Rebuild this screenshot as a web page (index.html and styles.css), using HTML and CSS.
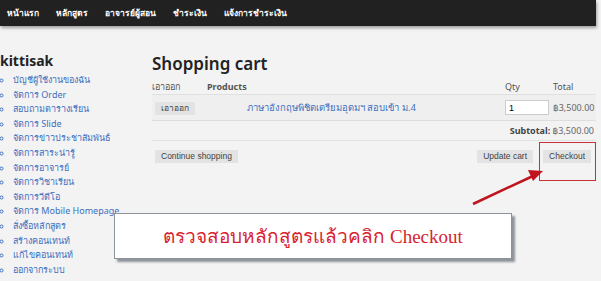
FILE: index.html
```html
<!DOCTYPE html>
<html lang="th">
<head>
  <meta charset="UTF-8" />
  <title>Shopping cart</title>
  <link rel="stylesheet" href="styles.css">
</head>
<body>

  <!-- Top navigation -->
  <div class="navbar">
    <a href="#">หน้าแรก</a>
    <a href="#">หลักสูตร</a>
    <a href="#">อาจารย์ผู้สอน</a>
    <a href="#">ชำระเงิน</a>
    <a href="#">แจ้งการชำระเงิน</a>
  </div>

  <div class="page">
    <!-- Sidebar -->
    <div class="sidebar">
      <h2>kittisak</h2>
      <ul>
        <li><a href="#">บัญชีผู้ใช้งานของฉัน</a></li>
        <li><a href="#">จัดการ Order</a></li>
        <li><a href="#">สอบถามตารางเรียน</a></li>
        <li><a href="#">จัดการ Slide</a></li>
        <li><a href="#">จัดการข่าวประชาสัมพันธ์</a></li>
        <li><a href="#">จัดการสาระน่ารู้</a></li>
        <li><a href="#">จัดการอาจารย์</a></li>
        <li><a href="#">จัดการวิชาเรียน</a></li>
        <li><a href="#">จัดการวีดีโอ</a></li>
        <li><a href="#">จัดการ Mobile Homepage</a></li>
        <li><a href="#">สั่งซื้อหลักสูตร</a></li>
        <li><a href="#">สร้างคอนเทนท์</a></li>
        <li><a href="#">แก้ไขคอนเทนท์</a></li>
        <li><a href="#">ออกจากระบบ</a></li>
      </ul>
    </div>

    <!-- Cart -->
    <div class="main">
      <h1>Shopping cart</h1>
      <table class="cart">
        <thead>
          <tr>
            <th class="col-remove">เอาออก</th>
            <th class="col-product">Products</th>
            <th class="col-qty">Qty</th>
            <th class="col-total">Total</th>
          </tr>
        </thead>
        <tbody>
          <tr class="item">
            <td><button class="btn">เอาออก</button></td>
            <td class="product"><a href="#">ภาษาอังกฤษพิชิตเตรียมอุดมฯ สอบเข้า ม.4</a></td>
            <td><input class="qty" type="text" value="1"></td>
            <td class="price">฿3,500.00</td>
          </tr>
          <tr class="subtotal">
            <td colspan="4"><strong>Subtotal:</strong> ฿3,500.00</td>
          </tr>
        </tbody>
      </table>
      <div class="actions">
        <button class="btn">Continue shopping</button>
        <div class="right">
          <button class="btn">Update cart</button>
          <button class="btn">Checkout</button>
        </div>
      </div>
    </div>
  </div>

  <!-- Annotation -->
  <div class="mark"></div>
  <svg class="arrow" width="601" height="281" viewBox="0 0 601 281">
    <line x1="473" y1="204" x2="533" y2="176" stroke="#c0141e" stroke-width="2.5"/>
    <polygon points="543,171 528,170 533,181" fill="#c0141e"/>
  </svg>
  <div class="callout">ตรวจสอบหลักสูตรแล้วคลิก Checkout</div>

</body>
</html>
```

FILE: styles.css
```css
body {
  font-family: 'Noto Sans', 'DejaVu Sans', sans-serif;
  background: #f3f3f3;
  color: #333;
  margin: 0;
  width: 601px;
  height: 281px;
  overflow: hidden;
  position: relative;
}

a {
  color: #3d6fbf;
  text-decoration: none;
}

/* Top bar */
.navbar {
  width: 589px;
  height: 26px;
  padding-left: 7px;
  background: #212121;
  box-shadow: 1px 2px 3px rgba(0, 0, 0, 0.35);
  display: flex;
  align-items: center;
  gap: 17px;
}

.navbar a {
  color: #fff;
  font-size: 8.5px;
  font-weight: bold;
}

.page {
  display: flex;
}

/* Sidebar */
.sidebar {
  width: 152px;
  padding-top: 26px;
}

.sidebar h2 {
  margin: 0 0 3px;
  font-size: 14px;
  line-height: 18px;
  color: #222;
}

.sidebar ul {
  margin: 0;
  padding-left: 13px;
  list-style: circle;
}

.sidebar li {
  font-size: 9px;
  line-height: 14.6px;
  color: #3d6fbf;
}

/* Main cart */
.main {
  width: 444px;
  padding-top: 26px;
}

.main h1 {
  margin: 0 0 3px;
  font-size: 17px;
  line-height: 24px;
  font-weight: 600;
  color: #222;
}

.cart {
  width: 100%;
  border-collapse: collapse;
  font-size: 9px;
  table-layout: fixed;
}

.cart th {
  text-align: left;
  font-weight: normal;
  color: #555;
  height: 15px;
  padding: 0;
  border-bottom: 1px solid #e0e0e0;
}

.cart .col-remove {
  width: 55px;
}

.cart .col-product {
  font-weight: bold;
  width: 298px;
}

.cart .col-qty {
  width: 48px;
}

.cart td {
  padding: 0;
}

.cart .item td {
  height: 25px;
  background: #efefef;
  border-bottom: 1px solid #dedede;
}

.cart .item td:first-child {
  padding-left: 3px;
}

.cart .product {
  padding-left: 40px !important;
  font-size: 9.5px;
}

.cart .price {
  color: #666;
}

.qty {
  width: 36px;
  height: 11px;
  padding: 1px 3px;
  font-size: 9px;
  border: 1px solid #ccc;
  background: #fff;
}

.cart .subtotal td {
  height: 19px;
  text-align: right;
  padding-right: 2px;
  color: #666;
  border-bottom: 1px solid #e2e2e2;
}

.cart .subtotal strong {
  color: #444;
}

.actions {
  display: flex;
  justify-content: space-between;
  padding: 9px 5px 0 3px;
}

.actions .right {
  display: flex;
  gap: 10px;
}

.btn {
  font-family: 'Liberation Sans', sans-serif;
  font-size: 8.5px;
  color: #444;
  background: #e3e3e3;
  border: none;
  padding: 2px 6px;
  height: 13px;
  line-height: 9px;
}

/* Annotation overlays */
.mark {
  position: absolute;
  left: 539px;
  top: 142px;
  width: 55px;
  height: 37px;
  border: 1px solid #c4323a;
}

.arrow {
  position: absolute;
  left: 0;
  top: 0;
}

.callout {
  position: absolute;
  left: 114px;
  top: 213px;
  width: 396px;
  height: 44px;
  background: #fff;
  border: 1px solid #8a929c;
  box-shadow: 3px 3px 2px rgba(60, 70, 80, 0.55);
  display: flex;
  align-items: center;
  justify-content: center;
  font-family: 'Liberation Serif', serif;
  font-size: 19px;
  color: #d8232e;
}
```
